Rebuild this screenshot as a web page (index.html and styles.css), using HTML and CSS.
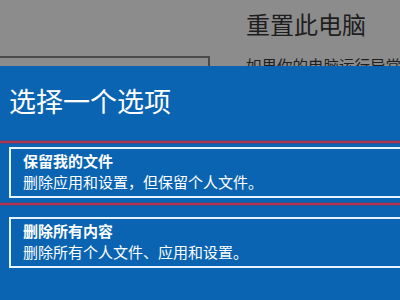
FILE: index.html
```html
<!DOCTYPE html>
<html lang="zh-CN">
<head>
    <meta charset="UTF-8">
    <meta name="viewport" content="width=device-width, initial-scale=1.0">
    <title>重置此电脑</title>
    <link rel="stylesheet" href="styles.css">
</head>
<body>
    <div class="settings">
        <div class="side">
            <div class="side-box"></div>
        </div>
        <div class="main">
            <h1>重置此电脑</h1>
            <p>如果你的电脑运行异常</p>
        </div>
    </div>

    <div class="dialog">
        <h2>选择一个选项</h2>
        <div class="rule"></div>
        <div class="option">
            <strong>保留我的文件</strong>
            <span>删除应用和设置，但保留个人文件。</span>
        </div>
        <div class="rule rule-second"></div>
        <div class="option option-second">
            <strong>删除所有内容</strong>
            <span>删除所有个人文件、应用和设置。</span>
        </div>
    </div>
</body>
</html>
```

FILE: styles.css
```css
html, body {
    margin: 0;
    padding: 0;
    height: 100%;
    overflow: hidden;
}

body {
    font-family: "Noto Sans CJK SC", "Noto Sans", sans-serif;
    background-color: #8c8c8c;
    display: flex;
    flex-direction: column;
}

.settings {
    display: flex;
    height: 66px;
    flex-shrink: 0;
    overflow: hidden;
}

.side {
    width: 210px;
    flex-shrink: 0;
}

.side-box {
    margin-top: 56px;
    height: 40px;
    border-top: 2px solid #4a4a4a;
    border-right: 2px solid #4a4a4a;
}

.main {
    padding-left: 36px;
    color: #1e1e1e;
}

.main h1 {
    margin: 9px 0 0;
    font-size: 24px;
    font-weight: normal;
    line-height: 30px;
}

.main p {
    margin: 16px 0 0;
    font-size: 15.5px;
    line-height: 20px;
    white-space: nowrap;
}

.dialog {
    flex: 1;
    background-color: #0a64b1;
    color: #fff;
    overflow: hidden;
}

.dialog h2 {
    margin: 0;
    padding: 17px 0 0 9px;
    font-size: 27px;
    font-weight: normal;
    line-height: 36px;
    height: 58px;
}

.rule {
    height: 2px;
    background-color: #b13352;
    box-shadow: 0 -1px 0 #3a4f8e, 0 1px 0 #3a4f8e;
}

.rule-second {
    margin-top: 5px;
}

.option {
    margin: 4px -20px 0 9px;
    padding: 2px 12px 3px;
    border: 2px solid #e6f4ff;
    display: flex;
    flex-direction: column;
}

.option-second {
    margin-top: 12px;
}

.option strong {
    font-size: 15px;
    line-height: 20px;
}

.option span {
    font-size: 15px;
    line-height: 22px;
}
```
